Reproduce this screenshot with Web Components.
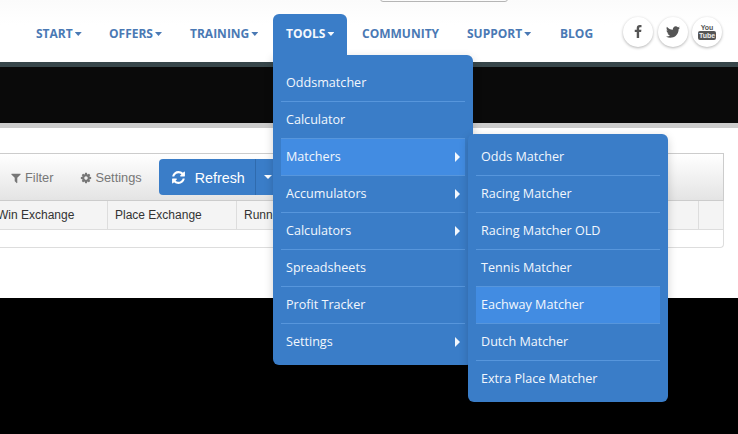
<!DOCTYPE html>
<html>
<head>
<meta charset="utf-8">
<style>
html, body { margin: 0; padding: 0; background: #000; }
body { width: 738px; height: 434px; overflow: hidden; font-family: "Open Sans", sans-serif; }
</style>
</head>
<body>
<site-nav></site-nav>
<page-banner></page-banner>
<matcher-panel></matcher-panel>
<script>
const icons = {
    filter: '<path d="M1595 295q17 41-14 70l-493 493v742q0 42-39 59-13 5-25 5-27 0-45-19l-256-256q-19-19-19-45v-486l-493-493q-31-29-14-70 17-39 59-39h1280q42 0 59 39z"/>',
    cog: '<path d="M1152 896q0-106-75-181t-181-75-181 75-75 181 75 181 181 75 181-75 75-181zm512-109v222q0 12-8 23t-20 13l-185 28q-19 54-39 91 35 50 107 138 10 12 10 25t-9 23q-27 37-99 108t-94 71q-12 0-26-9l-138-108q-44 23-91 38-16 136-29 186-7 28-36 28h-222q-14 0-24.5-8.5t-11.5-21.5l-28-184q-49-16-90-37l-141 107q-10 9-25 9-14 0-25-11-126-114-165-168-7-10-7-23 0-12 8-23 15-21 51-66.5t54-70.5q-27-50-41-99l-183-27q-13-2-21-12.5t-8-23.5v-222q0-12 8-23t19-13l186-28q14-46 39-92-40-57-107-138-10-12-10-24 0-10 9-23 26-36 98.5-107.5t94.5-71.5q13 0 26 10l138 107q44-23 91-38 16-136 29-186 7-28 36-28h222q14 0 24.5 8.5t11.5 21.5l28 184q49 16 90 37l142-107q9-9 24-9 13 0 25 10 129 119 165 170 7 8 7 22 0 12-8 23-15 21-51 66.5t-54 70.5q26 50 41 98l183 28q13 2 21 12.5t8 23.5z"/>',
    refresh: '<path d="M1639 1056q0 5-1 7-64 268-268 434.5t-478 166.5q-146 0-282.5-55t-243.5-157l-129 129q-19 19-45 19t-45-19-19-45v-448q0-26 19-45t45-19h448q26 0 45 19t19 45-19 45l-137 137q71 66 161 102t187 36q134 0 250-65t186-179q11-17 53-117 8-23 30-23h192q13 0 22.5 9.5t9.5 22.5zm25-800v448q0 26-19 45t-45 19h-448q-26 0-45-19t-19-45 19-45l138-138q-148-137-349-137-134 0-250 65t-186 179q-11 17-53 117-8 23-30 23h-199q-13 0-22.5-9.5t-9.5-22.5v-7q65-268 270-434.5t480-166.5q146 0 284 55.5t245 156.5l130-129q19-19 45-19t45 19 19 45z"/>',
    facebook: '<path d="M1343 12v264h-157q-86 0-116 36t-30 108v189h293l-39 296h-254v759h-306v-759h-255v-296h255v-218q0-186 104-288.5t277-102.5q147 0 228 12z"/>',
    twitter: '<path d="M1684 408q-67 98-162 167 1 14 1 42 0 130-38 259.5t-115.5 248.5-184.5 210.5-258 146-323 54.5q-271 0-496-145 35 4 78 4 225 0 401-138-105-2-188-64.5t-114-159.5q33 5 61 5 43 0 85-11-112-23-185.5-111.5t-73.5-205.5v-4q68 38 146 41-66-44-105-115t-39-154q0-88 44-163 121 149 294.5 238.5t371.5 99.5q-8-38-8-74 0-134 94.5-228.5t228.5-94.5q140 0 236 102 109-21 205-78-37 115-142 178 92-10 184-50z"/>'
};
const svg = (name, size, colour) => `<svg width="${size}" height="${size}" viewBox="0 0 1792 1792" fill="${colour}" style="display:block">${icons[name]}</svg>`;

class MenuList extends HTMLElement {
    constructor() {
        super();
        this.attachShadow({ mode: 'open' });
    }
    connectedCallback() {
        const items = JSON.parse(this.getAttribute('items'));
        this.shadowRoot.innerHTML = `
        <style>
        :host {
            display: block;
            position: absolute;
            width: 184px;
            background: #3a7dc8;
            padding: 0 8px 4px;
            color: #f2f7fd;
            font: 12.6px/16px "Open Sans", sans-serif;
            box-shadow: 0 3px 10px rgba(0,0,0,.18);
            z-index: 5;
        }
        .row {
            box-sizing: border-box;
            display: flex;
            align-items: center;
            justify-content: space-between;
            height: 37px;
            padding: 0 5px 1px;
            border-bottom: 1px solid #5796dc;
        }
        .row:last-of-type { border-bottom: none; height: 37px; padding-bottom: 2px; }
        .row.on { background: #428ce2; }
        .arrow {
            width: 0;
            height: 0;
            border-left: 5px solid #f2f7fd;
            border-top: 5px solid transparent;
            border-bottom: 5px solid transparent;
        }
        </style>
        ${items.map(item => `
            <div class="row ${item.on ? 'on' : ''}">
                <span>${item.label}</span>
                ${item.sub ? '<span class="arrow"></span>' : ''}
            </div>
        `).join('')}
        `;
    }
}

class SiteNav extends HTMLElement {
    constructor() {
        super();
        this.attachShadow({ mode: 'open' });
    }
    connectedCallback() {
        const links = [
            { label: 'START', caret: true, width: 73, pad: 12 },
            { label: 'OFFERS', caret: true, width: 81, pad: 12 },
            { label: 'TRAINING', caret: true, width: 95, pad: 12 },
            { label: 'TOOLS', caret: true, width: 74, pad: 13, open: true },
            { label: 'COMMUNITY', width: 105, pad: 15 },
            { label: 'SUPPORT', caret: true, width: 93, pad: 15 },
            { label: 'BLOG', width: 63, pad: 15 }
        ];
        this.shadowRoot.innerHTML = `
        <style>
        :host {
            display: block;
            height: 62px;
            background: linear-gradient(#fbfbfb, #ffffff 40%);
            font: bold 12px/16px "Open Sans", sans-serif;
            position: relative;
        }
        .search {
            position: absolute;
            top: -4px;
            left: 380px;
            width: 126px;
            height: 4px;
            border: 1px solid #b5b5b5;
            border-radius: 3px;
        }
        .bar {
            display: flex;
            align-items: flex-start;
            padding: 14px 0 0 24px;
        }
        .link {
            box-sizing: border-box;
            height: 40px;
            display: flex;
            align-items: center;
            color: #4a79b4;
        }
        .link.open {
            background: #3a7dc8;
            color: #f4f8fd;
            height: 41px;
            padding-bottom: 1px;
            border-radius: 6px 6px 0 0;
            position: relative;
            z-index: 7;
        }
        .caret {
            width: 7px;
            height: 4px;
            margin-left: 2px;
            background: currentColor;
            clip-path: polygon(0 0, 100% 0, 50% 100%);
        }
        .social {
            display: flex;
            gap: 4.5px;
            margin: 3px 0 0 15px;
        }
        .social a {
            width: 30px;
            height: 30px;
            border-radius: 50%;
            background: #fff;
            box-shadow: 0 1px 3px rgba(0,0,0,.3);
            display: flex;
            align-items: center;
            justify-content: center;
        }
        .yt {
            flex-direction: column;
            color: #555;
            font: bold 7px/7px "Liberation Sans", sans-serif;
        }
        .yt b {
            background: #555;
            color: #eee;
            border-radius: 2px;
            padding: 1px 1px 0;
            font-size: 7px;
            line-height: 8px;
        }
        #tools-menu { left: 273px; top: 55px; padding-top: 10px; border-radius: 0 6px 6px 6px; }
        #matchers-menu { left: 468px; top: 134px; padding-top: 5px; border-radius: 6px; z-index: 6; }
        </style>
        <div class="search"></div>
        <div class="bar">
            ${links.map(link => `
                <div class="link ${link.open ? 'open' : ''}" style="width:${link.width}px;padding-left:${link.pad}px">
                    ${link.label}${link.caret ? '<span class="caret"></span>' : ''}
                </div>
            `).join('')}
            <div class="social">
                <a>${svg('facebook', 14, '#555')}</a>
                <a>${svg('twitter', 16, '#555')}</a>
                <a class="yt"><span>You</span><b>Tube</b></a>
            </div>
        </div>
        <menu-list id="tools-menu" items='${JSON.stringify([
            { label: 'Oddsmatcher' },
            { label: 'Calculator' },
            { label: 'Matchers', sub: true, on: true },
            { label: 'Accumulators', sub: true },
            { label: 'Calculators', sub: true },
            { label: 'Spreadsheets' },
            { label: 'Profit Tracker' },
            { label: 'Settings', sub: true }
        ])}'></menu-list>
        <menu-list id="matchers-menu" items='${JSON.stringify([
            { label: 'Odds Matcher' },
            { label: 'Racing Matcher' },
            { label: 'Racing Matcher OLD' },
            { label: 'Tennis Matcher' },
            { label: 'Eachway Matcher', on: true },
            { label: 'Dutch Matcher' },
            { label: 'Extra Place Matcher' }
        ])}'></menu-list>
        `;
    }
}

class PageBanner extends HTMLElement {
    constructor() {
        super();
        this.attachShadow({ mode: 'open' });
        this.shadowRoot.innerHTML = `
        <style>
        :host {
            display: block;
            height: 56px;
            background: #0a0a0a;
            border-top: 5px solid #37464a;
            border-bottom: 5px solid #cccccc;
        }
        </style>
        `;
    }
}

class MatcherPanel extends HTMLElement {
    constructor() {
        super();
        this.attachShadow({ mode: 'open' });
    }
    connectedCallback() {
        this.shadowRoot.innerHTML = `
        <style>
        :host {
            display: block;
            box-sizing: border-box;
            height: 170px;
            padding: 25px 14px 0 0;
            background: #fff;
            font: 12px/16px "Liberation Sans", sans-serif;
            color: #333;
        }
        .toolbar {
            box-sizing: border-box;
            height: 48px;
            margin-left: -8px;
            display: flex;
            align-items: center;
            padding: 0 0 0 17px;
            border: 1px solid #ccc;
            background: linear-gradient(#ffffff, #e4e4e4);
            color: #777;
        }
        .tool {
            display: flex;
            align-items: center;
            gap: 3px;
            font-size: 12.8px;
            padding-top: 1px;
        }
        .tool + .tool { margin-left: 27px; }
        .refresh {
            display: flex;
            align-items: stretch;
            height: 36px;
            margin-left: 17px;
            color: #fff;
            background: #3a7dc8;
            border-radius: 4px;
            font-size: 14.3px;
        }
        .refresh .main {
            display: flex;
            align-items: center;
            gap: 9px;
            width: 97px;
            box-sizing: border-box;
            padding: 1px 0 0 12px;
            border-right: 1px solid #2f6bae;
        }
        .refresh .drop {
            width: 40px;
            display: flex;
            align-items: center;
            padding-left: 8px;
            box-sizing: border-box;
        }
        .refresh .drop i {
            width: 0;
            height: 0;
            border-top: 4px solid #fff;
            border-left: 4px solid transparent;
            border-right: 4px solid transparent;
        }
        .table {
            margin-left: -11px;
            height: 47px;
            box-sizing: border-box;
            border: 1px solid #ddd;
            border-top: none;
            border-radius: 0 0 4px 0;
        }
        .head {
            display: grid;
            grid-template-columns: 118px 129px 462px 1fr;
            height: 29px;
            background: #f4f4f4;
            border-bottom: 1px solid #ddd;
            box-sizing: border-box;
        }
        .head div {
            box-sizing: border-box;
            padding: 6px 0 0 7px;
            border-right: 1px solid #ddd;
            white-space: nowrap;
            overflow: hidden;
        }
        .head div:last-child { border-right: none; }
        </style>
        <div class="toolbar">
            <div class="tool">${svg('filter', 12, '#777')}Filter</div>
            <div class="tool">${svg('cog', 12, '#777')}Settings</div>
            <div class="refresh">
                <div class="main">${svg('refresh', 15, '#fff')}<span>Refresh</span></div>
                <div class="drop"><i></i></div>
            </div>
        </div>
        <div class="table">
            <div class="head">
                <div>Win Exchange</div>
                <div>Place Exchange</div>
                <div>Runners</div>
                <div></div>
            </div>
        </div>
        `;
    }
}

customElements.define('menu-list', MenuList);
customElements.define('site-nav', SiteNav);
customElements.define('page-banner', PageBanner);
customElements.define('matcher-panel', MatcherPanel);
</script>
</body>
</html>
